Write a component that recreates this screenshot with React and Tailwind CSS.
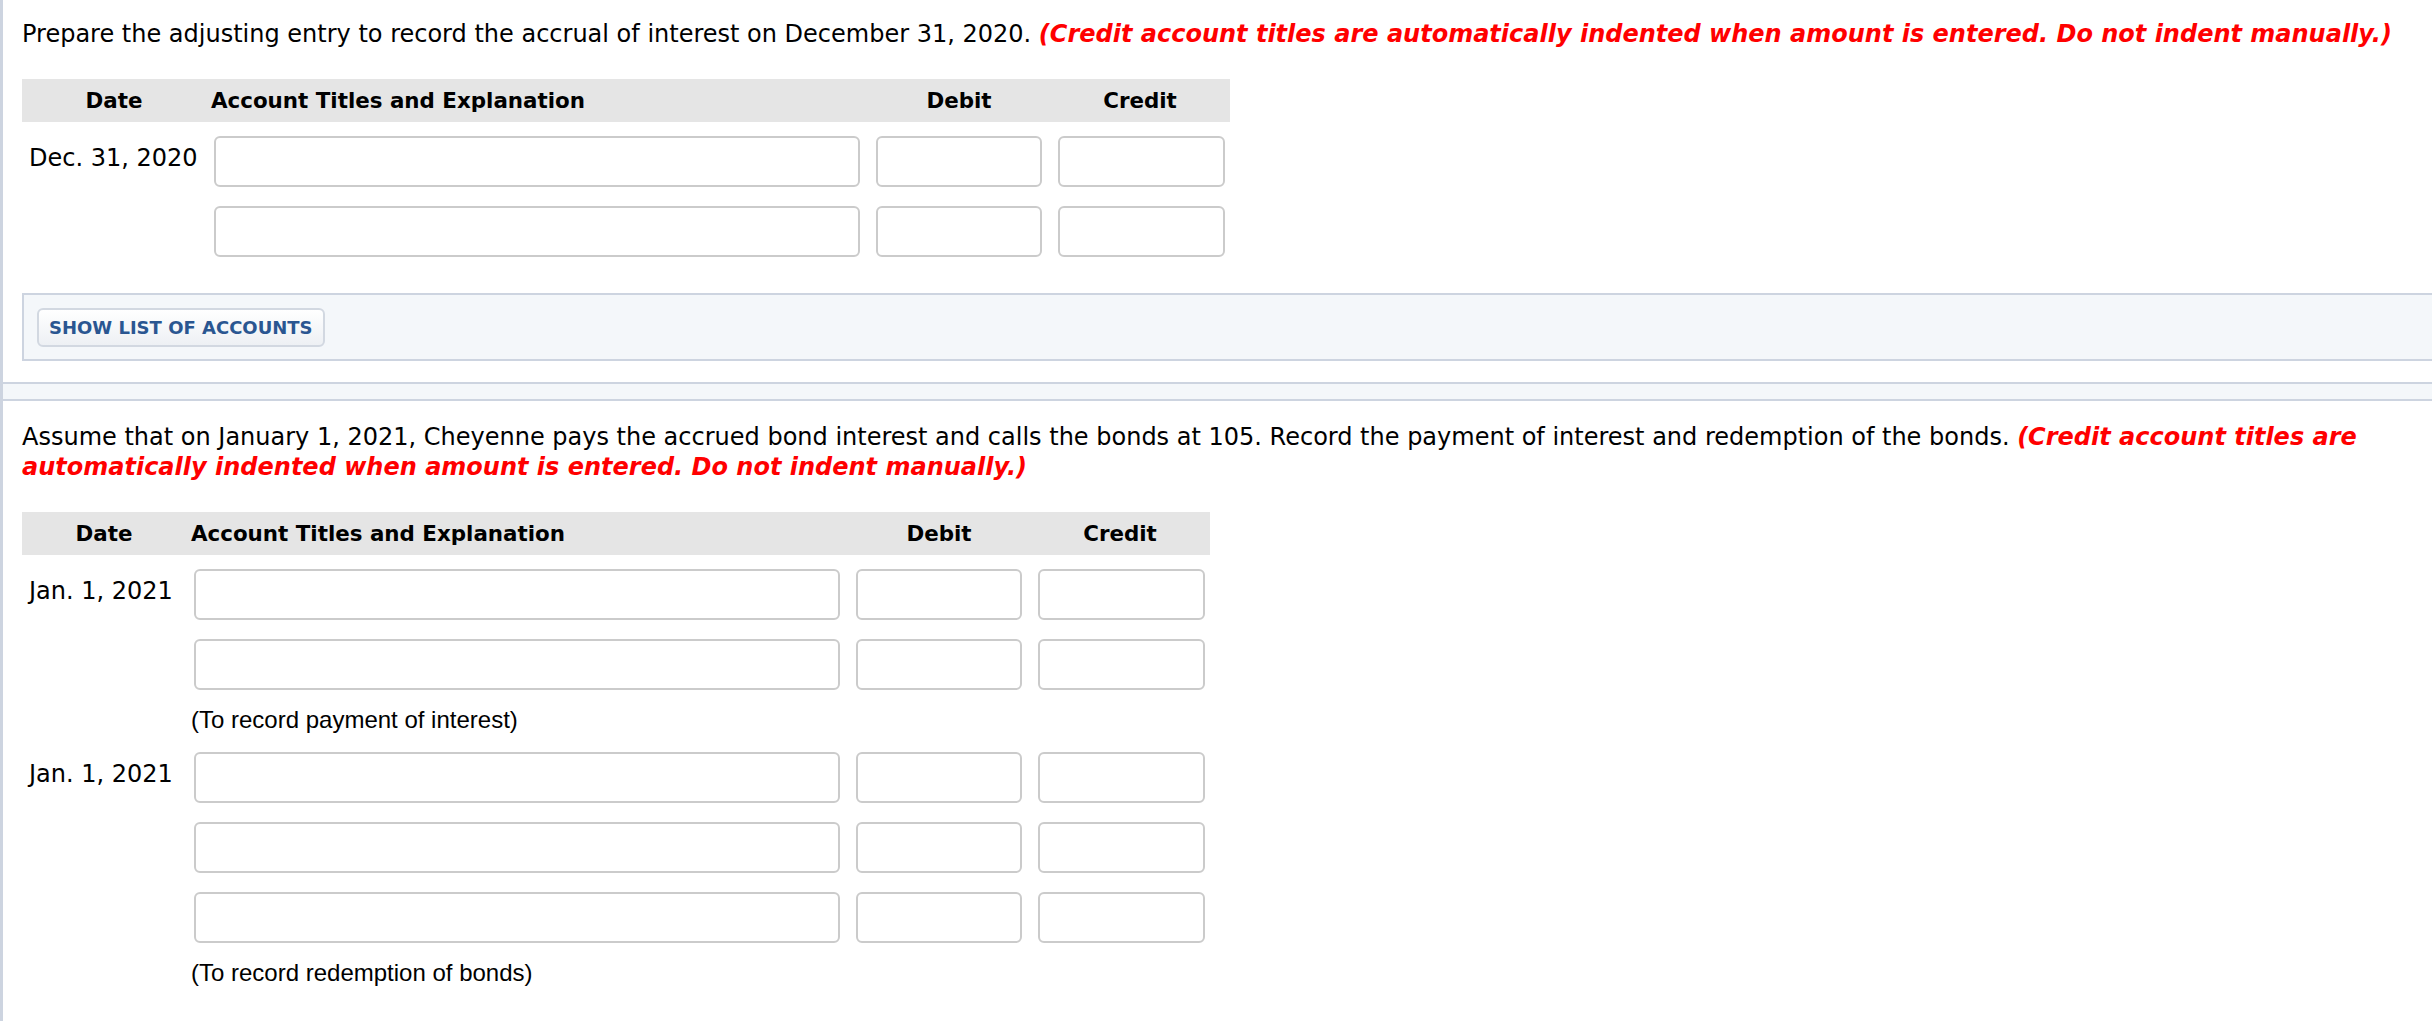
import React from "react";

function Header({ dateW }) {
  return (
    <div className="flex h-[43px] w-fit items-center bg-[#e5e5e5] text-[21.4px] font-bold leading-none text-black">
      <div className={dateW + " shrink-0 text-center"}>Date</div>
      <div className="w-[662px] shrink-0 pl-[5px]">Account Titles and Explanation</div>
      <div className="w-[182px] shrink-0 text-center">Debit</div>
      <div className="w-[180px] shrink-0 text-center">Credit</div>
    </div>
  );
}

function Field({ w }) {
  return (
    <input
      type="text"
      readOnly
      className={"block h-[51px] rounded-[6px] border-2 border-[#cbcbcb] bg-white outline-none " + w}
    />
  );
}

function Row({ dateW, date }) {
  return (
    <div className="flex h-[70px] items-center">
      <div className={dateW + " shrink-0 self-center pb-[6px] pl-[7px] text-[24px] leading-[30px]"}>{date}</div>
      <div className="shrink-0 px-[8px]">
        <Field w="w-[646px]" />
      </div>
      <div className="shrink-0 px-[8px]">
        <Field w="w-[166px]" />
      </div>
      <div className="shrink-0 pl-[8px] pr-[5px]">
        <Field w="w-[167px]" />
      </div>
    </div>
  );
}

function Note({ children }) {
  return (
    <div className="pb-[7px] pl-[169px] pt-[6px] font-['Liberation_Sans',sans-serif] text-[24px] leading-[30px]">
      {children}
    </div>
  );
}

function Instruction() {
  return (
    <span className="font-bold italic text-[#ff0000]">
      (Credit account titles are automatically indented when amount is entered. Do not indent manually.)
    </span>
  );
}

export default function App() {
  return (
    <div className="min-h-screen bg-white font-['DejaVu_Sans',sans-serif] text-black">
      <section className="border-b-2 border-l-[3px] border-[#cdd4e0] pb-[21px] pl-[19px] pt-[19px]">
        <p className="pr-[12px] text-[24px] leading-[30px]">
          Prepare the adjusting entry to record the accrual of interest on December 31, 2020.{" "}
          <Instruction />
        </p>
        <div className="mt-[30px]">
          <Header dateW="w-[184px]" />
          <div className="mt-[4px]">
            <Row dateW="w-[184px]" date="Dec. 31, 2020" />
            <Row dateW="w-[184px]" date="" />
          </div>
        </div>
        <div className="mt-[27px] border-y-2 border-l-2 border-[#cdd4e0] bg-[#f4f7fa] pb-[12px] pl-[13px] pt-[13px]">
          <button
            type="button"
            className="h-[39px] rounded-[6px] border-2 border-[#d2d8e1] bg-linear-to-b from-white to-[#edf0f4] px-[10px] text-[18px] font-bold leading-none text-[#2a5691]"
          >
            SHOW LIST OF ACCOUNTS
          </button>
        </div>
      </section>
      <div className="h-[15px] border-l-[3px] border-[#cdd4e0] bg-[#f4f7fa]" />
      <section className="border-l-[3px] border-t-2 border-[#cdd4e0] pb-[30px] pl-[19px] pt-[21px]">
        <p className="pr-[12px] text-[24px] leading-[30px]">
          Assume that on January 1, 2021, Cheyenne pays the accrued bond interest and calls the bonds at 105. Record the
          payment of interest and redemption of the bonds. <Instruction />
        </p>
        <div className="mt-[30px]">
          <Header dateW="w-[164px]" />
          <div className="mt-[4px]">
            <Row dateW="w-[164px]" date="Jan. 1, 2021" />
            <Row dateW="w-[164px]" date="" />
            <Note>(To record payment of interest)</Note>
            <Row dateW="w-[164px]" date="Jan. 1, 2021" />
            <Row dateW="w-[164px]" date="" />
            <Row dateW="w-[164px]" date="" />
            <Note>(To record redemption of bonds)</Note>
          </div>
        </div>
      </section>
    </div>
  );
}
